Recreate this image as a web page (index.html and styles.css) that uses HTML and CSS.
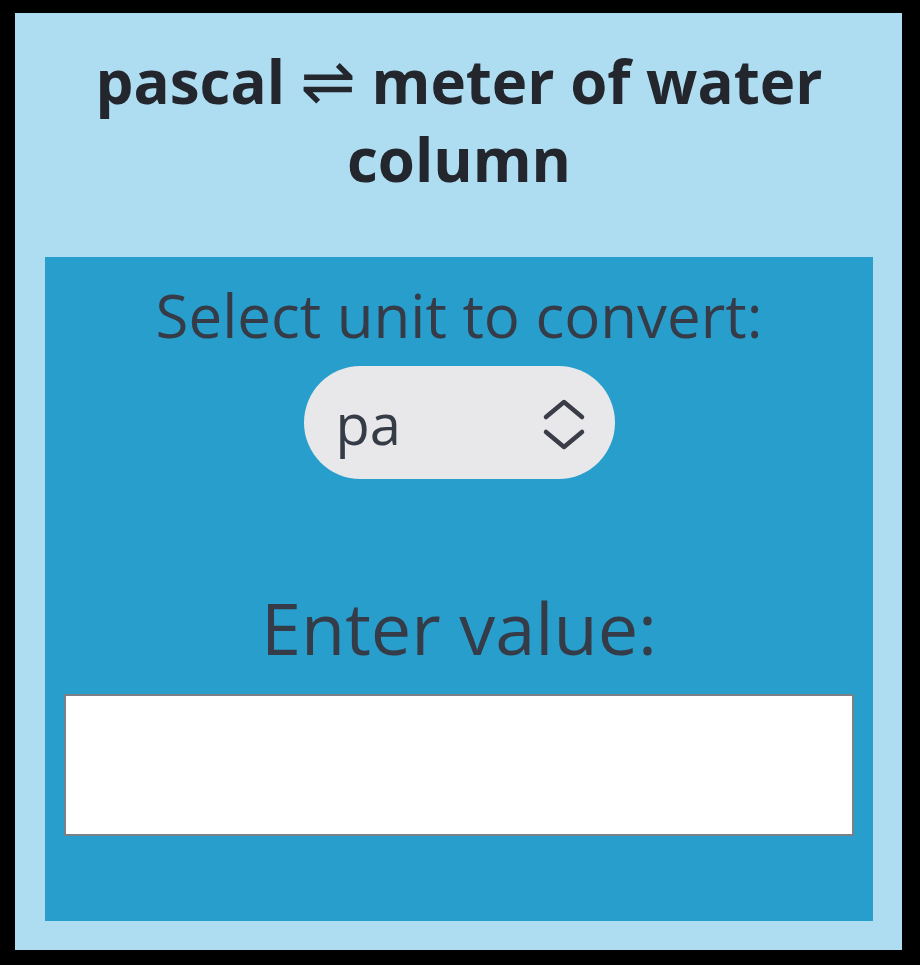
FILE: index.html
```html
<!DOCTYPE html>
<html lang="en">
<head>
<meta charset="utf-8">
<title>pascal ⇌ meter of water column</title>
<link rel="stylesheet" href="styles.css">
</head>
<body>
<main class="panel">
  <h1 class="title">pascal <span class="swap">⇌</span> meter of water column</h1>
  <section class="converter">
    <label class="label-unit" for="unit">Select unit to convert:</label>
    <div class="select-wrap">
      <select id="unit" class="unit-select">
        <option>pa</option>
        <option>mH2O</option>
      </select>
      <svg class="chevrons" width="44" height="52" viewBox="0 0 44 52" aria-hidden="true">
        <path d="M4 18 L22 3 L40 18" />
        <path d="M4 33 L22 48 L40 33" />
      </svg>
    </div>
    <label class="label-value" for="value">Enter value:</label>
    <input id="value" class="value-input" type="text">
  </section>
</main>
</body>
</html>
```
FILE: styles.css
```css
html, body {
  margin: 0;
  padding: 0;
  background: #000;
}

body {
  font-family: "Open Sans", "Noto Sans", sans-serif;
  padding: 13px 18px 15px 15px;
}

.panel {
  background: #aedcf0;
  padding: 29px 29px 29px 30px;
  display: flex;
  flex-direction: column;
}

.title {
  margin: 0 0 59px;
  font-size: 60px;
  line-height: 78px;
  font-weight: 700;
  text-align: center;
  color: #23262d;
}

.swap {
  font-family: "DejaVu Sans", sans-serif;
  font-weight: 400;
  font-size: 66px;
  line-height: 1;
}

.converter {
  background: #279ecc;
  padding: 17px 19px 85px 19px;
  display: flex;
  flex-direction: column;
  align-items: center;
}

.label-unit {
  font-size: 60px;
  line-height: 82px;
  color: #353b47;
}

.select-wrap {
  position: relative;
  margin-top: 10px;
}

.unit-select {
  appearance: none;
  -webkit-appearance: none;
  width: 311px;
  height: 113px;
  border: none;
  border-radius: 57px;
  background: #e8e8ea;
  color: #353b47;
  font-family: "Open Sans", "Noto Sans", sans-serif;
  font-size: 56px;
  padding: 0 0 0 32px;
  outline: none;
}

.chevrons {
  position: absolute;
  left: 238px;
  top: 33px;
  pointer-events: none;
}

.chevrons path {
  fill: none;
  stroke: #3a3d48;
  stroke-width: 4.5;
  stroke-linecap: round;
  stroke-linejoin: round;
}

.label-value {
  margin-top: 99px;
  font-size: 72px;
  line-height: 98px;
  color: #353b47;
}

.value-input {
  margin-top: 18px;
  box-sizing: border-box;
  width: 790px;
  height: 142px;
  border: 2px solid #7a8088;
  background: #fff;
  font-size: 40px;
  padding: 0 16px;
}
```
